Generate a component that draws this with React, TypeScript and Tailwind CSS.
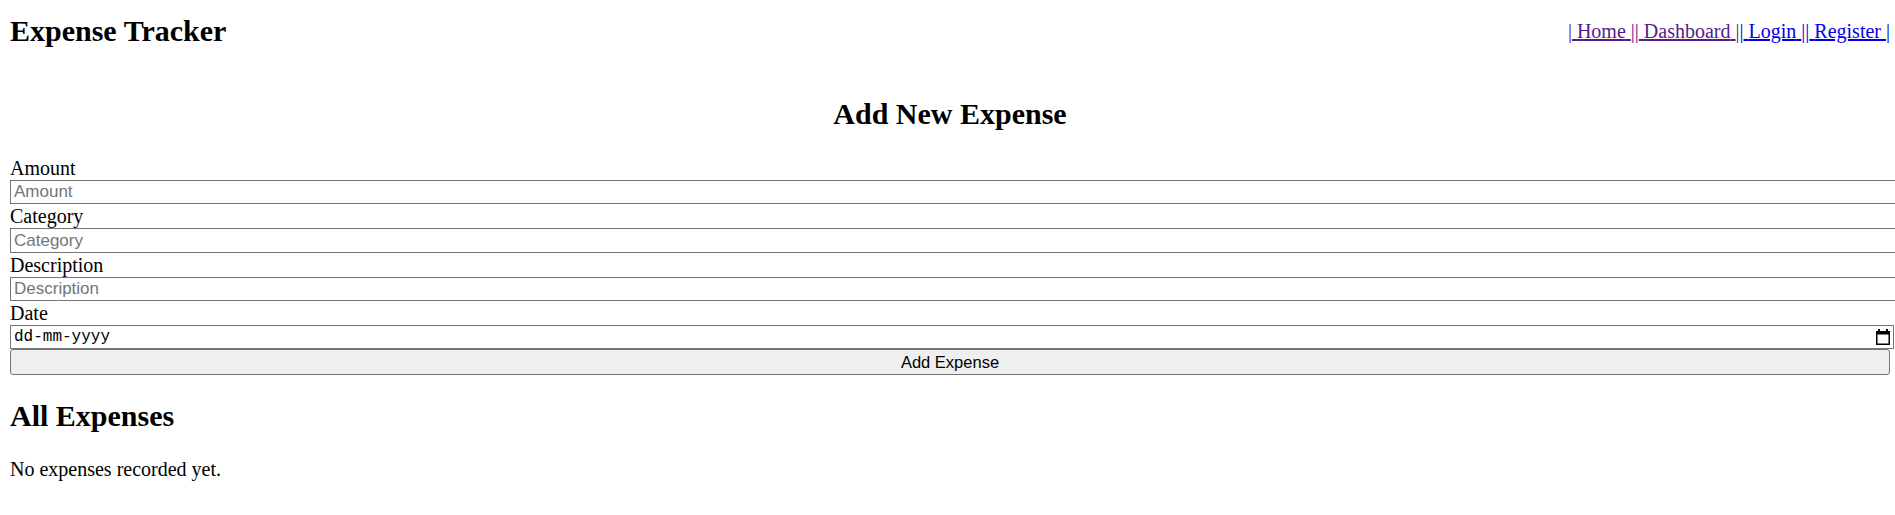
import React from "react";

const links = [
  { label: "Home", visited: true },
  { label: "Dashboard", visited: true },
  { label: "Login", visited: false },
  { label: "Register", visited: false },
];

const fields = ["Amount", "Category", "Description"];

export default function App() {
  return (
    <div className="w-full min-h-[515px] overflow-hidden bg-white text-black font-['Liberation_Serif','Times_New_Roman',serif]">
      <div className="pl-[10px] pr-[5px]">
        <header className="flex items-center justify-between pt-[14px] pb-[23.5px]">
          <h2 className="m-0 text-[30px] font-bold leading-[34.5px]">Expense Tracker</h2>
          <nav className="text-[20px] leading-[23px]">
            {links.map((l) => (
              <a
                key={l.label}
                href="#"
                className={
                  l.visited
                    ? "underline text-[#551a8b]"
                    : "underline text-[#0000ee]"
                }
              >
                <span className="inline-block">|</span> {l.label} <span className="inline-block">|</span>
              </a>
            ))}
          </nav>
        </header>

        <h2 className="mt-[25px] mb-[24.5px] text-center text-[30px] font-bold leading-[34.5px]">
          Add New Expense
        </h2>

        <form className="flex flex-col" onSubmit={(e) => e.preventDefault()}>
          {fields.map((f) => (
            <div key={f} className="flex flex-col">
              <label className="block text-[20px] leading-[24px]">{f}</label>
              <input
                type="text"
                placeholder={f}
                className="block h-[24.35px] w-[calc(100%+7px)] border border-[#767676] bg-white pl-[3px] pr-[2px] font-['Liberation_Sans',Arial,sans-serif] text-[17px] text-black outline-none placeholder:text-[#757575]"
              />
            </div>
          ))}
          <label className="block text-[20px] leading-[24px]">Date</label>
          <div className="flex h-[24.35px] w-[calc(100%+4px)] items-center justify-between border border-[#767676] bg-white pl-[3px] pr-[3px]">
            <span className="font-['Liberation_Mono','Courier_New',monospace] text-[16px] leading-none text-black">
              dd-mm-yyyy
            </span>
            <svg width="14" height="16" viewBox="0 0 14 16" aria-hidden="true">
              <rect x="2" y="0" width="2" height="3" fill="#000" />
              <rect x="10" y="0" width="2" height="3" fill="#000" />
              <rect x="0.75" y="2.75" width="12.5" height="12.5" fill="none" stroke="#000" strokeWidth="1.5" />
              <rect x="0.75" y="2.5" width="12.5" height="3" fill="#000" />
            </svg>
          </div>
          <button
            type="submit"
            className="h-[25.4px] w-full rounded-[3px] border border-[#767676] bg-[#efefef] font-['Liberation_Sans',Arial,sans-serif] text-[16.5px] leading-none text-black"
          >
            Add Expense
          </button>
        </form>

        <h2 className="mt-[24px] mb-[25px] text-[30px] font-bold leading-[34.5px]">All Expenses</h2>
        <p className="m-0 text-[20px] leading-[23px]">No expenses recorded yet.</p>
      </div>
    </div>
  );
}
